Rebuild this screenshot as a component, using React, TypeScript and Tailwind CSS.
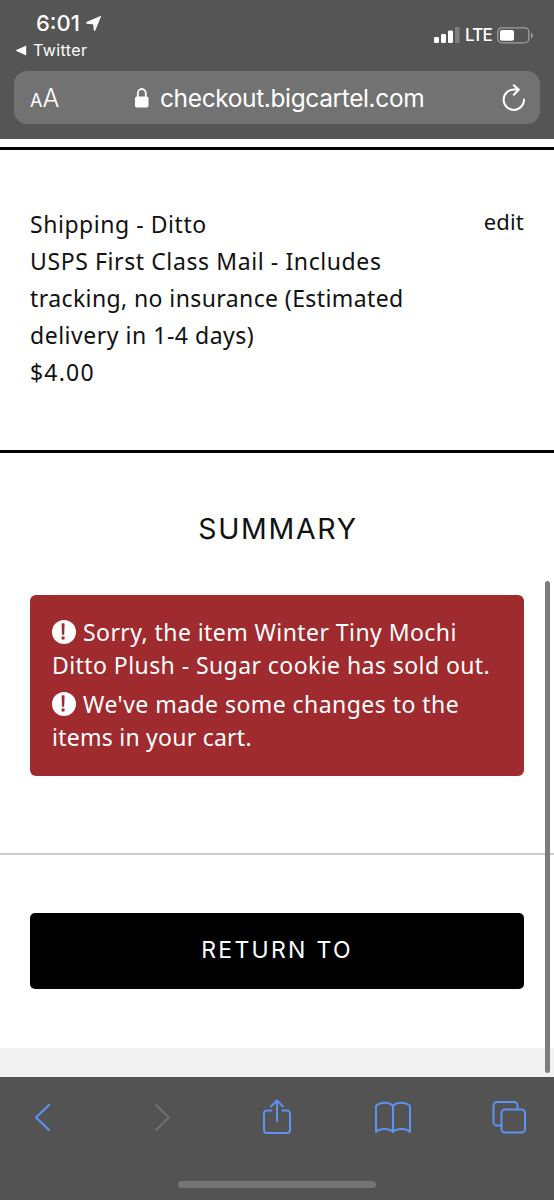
import type { ReactNode } from "react";

const BODY_FONT = "font-['Noto_Sans','Open_Sans',sans-serif]";

function StatusBar() {
  return (
    <div className="flex h-[70px] justify-between pt-[9px] pr-[20px] pl-[16px]">
      <div>
        <div className="flex h-[27px] items-center pl-[20px]">
          <span className="text-[22px] leading-[27px] font-medium">6:01</span>
          <svg className="ml-[6px] size-[15px]" viewBox="0 0 15 15" fill="currentColor">
            <path d="M14.4 0 .6 6c-.8.4-.6 1.600.3 1.700l5.600.500c.5.1.7.3.8.8l.5 5.200c.1.9 1.100 1.100 1.500.3L15 .6c.2-.4-.2-.8-.6-.6Z" />
          </svg>
        </div>
        <div className="flex h-[27px] items-center">
          <svg className="h-[11px] w-[11px]" viewBox="0 0 11 11" fill="currentColor">
            <path d="M10.2.6v9.800L.4 6.100c-.5-.3-.5-.9 0-1.200Z" />
          </svg>
          <span className="ml-[6px] text-[16px] leading-[27px] tracking-[0.4px]">Twitter</span>
        </div>
      </div>
      <div className="flex h-[50px] items-center">
        <svg className="h-[16px] w-[26px]" viewBox="0 0 26 16" fill="currentColor">
          <rect x="0" y="10" width="5" height="6" rx="1.3" />
          <rect x="7" y="7" width="5" height="9" rx="1.3" />
          <rect x="14" y="3.5" width="5" height="12.5" rx="1.3" />
          <rect x="21" y="0" width="4.6" height="16" rx="1.3" opacity=".25" />
        </svg>
        <span className="ml-[5px] w-[27px] pt-px text-[17px] font-medium tracking-[-0.8px]">LTE</span>
        <svg className="ml-[5px] h-[17px] w-[37px]" viewBox="0 0 37 17">
          <rect x=".8" y=".8" width="31" height="15" rx="4" fill="none" stroke="#a0a0a0" strokeWidth="1.3" />
          <rect x="3" y="3" width="14" height="10.8" rx="2" fill="#fff" />
          <path d="M34 5.5c2.300.9 2.300 5 0 6Z" fill="#a0a0a0" />
        </svg>
      </div>
    </div>
  );
}

function AddressBar() {
  return (
    <div className="mx-[14px] flex h-[53px] items-center rounded-[13px] bg-[#727272] pl-[16px]">
      <span className="flex w-[105px] items-baseline pt-[2px]">
        <span className="text-[18px] leading-none">A</span>
        <span className="text-[25px] leading-none font-light">A</span>
      </span>
      <svg className="h-[20px] w-[14px]" viewBox="0 0 14 20">
        <rect x="0" y="8.5" width="13.5" height="11" rx="1.8" fill="#fff" />
        <path d="M2.8 9V5.300a4 4.300 0 0 1 8 0V9" fill="none" stroke="#fff" strokeWidth="1.8" />
      </svg>
      <span className="ml-[11px] w-[342px] pt-[2px] text-[24.5px] leading-[51px] tracking-[-0.38px]">
        checkout.bigcartel.com
      </span>
      <svg className="h-[28px] w-[24px] shrink-0" viewBox="0 0 24 28" fill="none" stroke="#fff" strokeWidth="2" strokeLinecap="round" strokeLinejoin="round">
        <path d="M22 15.500A10.200 10.200 0 1 1 11.800 5.500h5M11.800 1.200l5 4.500-5 5" />
      </svg>
    </div>
  );
}

function AlertIcon() {
  return (
    <svg className="mr-[7px] inline-block size-[24px] align-[-3px]" viewBox="0 0 24 24">
      <circle cx="12" cy="12" r="12" fill="#fff" />
      <path d="M9.600 3.800c0-.8 3-.8 3 0l-.4 10.500c0 .8-2.200.8-2.200 0Z" fill="#a02b2f" />
      <circle cx="11.1" cy="18" r="1.7" fill="#a02b2f" />
    </svg>
  );
}

function ToolIcon({ children, className }: { children: ReactNode; className: string }) {
  return (
    <svg className={className} viewBox="0 0 36 36" fill="none" stroke="currentColor" strokeWidth="2" strokeLinecap="round" strokeLinejoin="round">
      {children}
    </svg>
  );
}

export default function App() {
  return (
    <div className="relative flex h-[1200px] w-[554px] flex-col overflow-hidden bg-white">
      <header className="h-[139px] shrink-0 bg-[#555] pt-px font-[Inter,sans-serif] text-white">
        <StatusBar />
        <AddressBar />
      </header>

      <main className={`flex h-[938px] flex-col text-[23px] text-[#111] ${BODY_FONT}`}>
        <section className="mt-[8px] flex h-[306px] justify-between border-y-[3px] border-black px-[30px] pt-[56px] leading-[37px]">
          <div className="whitespace-nowrap">
            <p className="tracking-[0.55px]">Shipping - Ditto</p>
            <p className="tracking-[0.6px]">USPS First Class Mail - Includes</p>
            <p className="tracking-[0.4px]">tracking, no insurance (Estimated</p>
            <p className="tracking-[0.52px]">delivery in 1-4 days)</p>
            <p className="tracking-[1.2px]">$4.00</p>
          </div>
          <a href="#" className="-mt-[3px] h-[37px] text-[22px] tracking-[0.2px]">edit</a>
        </section>

        <h2 className="mt-[56px] h-[40px] pl-[2px] text-center font-[Inter,sans-serif] text-[28.5px] leading-[40px] tracking-[1.7px]">SUMMARY</h2>

        <div className="mx-[30px] mt-[46px] h-[181px] rounded-[6px] bg-[#a02b2f] px-[22px] pt-[21px] leading-[32.5px] whitespace-nowrap text-white">
          <p className="tracking-[0.43px]"><AlertIcon />Sorry, the item Winter Tiny Mochi</p>
          <p className="tracking-[0.43px]">Ditto Plush - Sugar cookie has sold out.</p>
          <p className="mt-[7px] tracking-[0.45px]"><AlertIcon />We've made some changes to the</p>
          <p className="tracking-[0.25px]">items in your cart.</p>
        </div>

        <hr className="mt-[77px] border-t-2 border-[#ccc]" />
        <button className="mx-[30px] mt-[58px] h-[76px] rounded-[5px] bg-black pb-[2px] font-[Inter,sans-serif] text-[23px] tracking-[2.3px] text-white">
          RETURN TO
        </button>
        <div className="mt-[59px] h-[29px] bg-[#f2f2f2]" />
      </main>

      <footer className="h-[123px] bg-[#535353] text-[#5e91f2]">
        <div className="flex h-[104px] items-start pt-[22px]">
          <ToolIcon className="ml-[25px] size-[36px]"><path d="M24 6 11 18.500 24 31" strokeWidth="2.200" /></ToolIcon>
          <ToolIcon className="ml-[83px] size-[36px] text-[#707070]"><path d="M12 6 25 18.500 12 31" /></ToolIcon>
          <ToolIcon className="ml-[79px] size-[36px]">
            <path d="M12.500 11.500H8a3 3 0 0 0-3 3V31a3 3 0 0 0 3 3h20a3 3 0 0 0 3-3V14.500a3 3 0 0 0-3-3h-4.500M18 22V1.500M12 7.500l6-6 6 6" />
          </ToolIcon>
          <ToolIcon className="ml-[80px] size-[36px]">
            <path d="M18 7c-3-4.500-13-4.500-17 0v26c4-4 13-4 17 0 4-4 13-4 17 0V7c-4-4.500-14-4.500-17 0v26" />
          </ToolIcon>
          <ToolIcon className="ml-[80px] size-[36px]">
            <rect x="10.500" y="10.500" width="23.500" height="23" rx="3.500" />
            <path d="M10.500 26.500H6a3.500 3.500 0 0 1-3.500-3.500V6.500A3.500 3.500 0 0 1 6 3h17a3.500 3.500 0 0 1 3.500 3.500v4" />
          </ToolIcon>
        </div>
        <div className="mx-auto h-[7px] w-[198px] rounded-full bg-[#747474]" />
      </footer>

      {/* page scroll indicator, floats over the content */}
      <div className="absolute top-[581px] right-[4px] h-[492px] w-[5px] rounded-full bg-[#7c7c7c]" />
    </div>
  );
}
